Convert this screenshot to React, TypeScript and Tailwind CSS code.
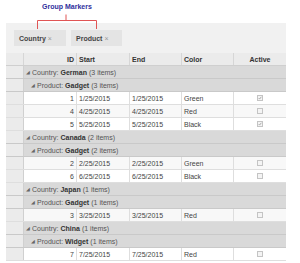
import React from "react";

type Row =
  | { kind: "country"; name: string; count: number }
  | { kind: "product"; name: string; count: number }
  | { kind: "data"; id: number; start: string; end: string; color: string; active: boolean; alt: boolean };

const rows: Row[] = [
  { kind: "country", name: "German", count: 3 },
  { kind: "product", name: "Gadget", count: 3 },
  { kind: "data", id: 1, start: "1/25/2015", end: "1/25/2015", color: "Green", active: true, alt: false },
  { kind: "data", id: 4, start: "4/25/2015", end: "4/25/2015", color: "Red", active: false, alt: true },
  { kind: "data", id: 5, start: "5/25/2015", end: "5/25/2015", color: "Black", active: true, alt: false },
  { kind: "country", name: "Canada", count: 2 },
  { kind: "product", name: "Gadget", count: 2 },
  { kind: "data", id: 2, start: "2/25/2015", end: "2/25/2015", color: "Green", active: false, alt: true },
  { kind: "data", id: 6, start: "6/25/2015", end: "6/25/2015", color: "Black", active: false, alt: false },
  { kind: "country", name: "Japan", count: 1 },
  { kind: "product", name: "Gadget", count: 1 },
  { kind: "data", id: 3, start: "3/25/2015", end: "3/25/2015", color: "Red", active: false, alt: true },
  { kind: "country", name: "China", count: 1 },
  { kind: "product", name: "Widget", count: 1 },
  { kind: "data", id: 7, start: "7/25/2015", end: "7/25/2015", color: "Red", active: false, alt: false },
];

const Check: React.FC<{ on: boolean }> = ({ on }) => (
  <div className="w-[6px] h-[6px] border border-[#c4c4c4] bg-[#f4f4f4] flex items-center justify-center">
    {on && (
      <svg width="6" height="6" viewBox="0 0 6 6">
        <path d="M1 3.2 L2.4 4.6 L5 1.2" stroke="#8a8a8a" strokeWidth="1" fill="none" />
      </svg>
    )}
  </div>
);

const GroupRow: React.FC<{ label: string; name: string; count: number; indent: boolean }> = ({ label, name, count, indent }) => (
  <div className="flex h-[13px] border-b border-[#c9c9c9]">
    <div className="w-[18px] bg-[#ebebeb] border-r border-[#d0d0d0]" />
    <div className={`flex-1 bg-[#d9d9d9] flex items-center text-[#555] ${indent ? "pl-[7px]" : "pl-[2px]"}`}>
      <span className="text-[5px] text-[#666] mr-[2px]">◢</span>
      <span>{label}: </span>
      <span className="font-bold text-[#333] ml-[2px]">{name}</span>
      <span className="ml-[2px]">({count} items)</span>
    </div>
  </div>
);

const App: React.FC = () => {
  return (
    <div className="w-[300px] h-[263px] bg-white relative font-['Liberation_Sans',Arial,sans-serif] text-[7px] leading-none overflow-hidden">
      {/* Title */}
      <div className="h-[23px] pl-[42px] pt-[3px] text-[#2f2f9c] font-semibold">Group Markers</div>

      <div className="ml-[6px] w-[280px]">
        {/* Group panel */}
        <div className="h-[30px] bg-[#f1f1f1] flex items-center gap-[5px] pl-[8px]">
          <div className="h-[16px] w-[52px] bg-[#e4e4e4] flex items-center pl-[5px] text-[#444]">
            <span className="font-bold">Country</span>
            <span className="ml-[2px] text-[#999]">×</span>
          </div>
          <div className="h-[16px] w-[51px] bg-[#e4e4e4] flex items-center pl-[5px] text-[#444]">
            <span className="font-bold">Product</span>
            <span className="ml-[2px] text-[#999]">×</span>
          </div>
        </div>

        {/* Grid header */}
        <div className="flex h-[13px] bg-[#ebebeb] border-b border-[#cfcfcf] text-[#333] font-bold">
          <div className="w-[18px] border-r border-[#d6d6d6]" />
          <div className="w-[53px] border-r border-[#d6d6d6] flex items-center justify-end pr-[2px]">ID</div>
          <div className="w-[53px] border-r border-[#d6d6d6] flex items-center pl-[2px]">Start</div>
          <div className="w-[52px] border-r border-[#d6d6d6] flex items-center pl-[2px]">End</div>
          <div className="w-[52px] border-r border-[#d6d6d6] flex items-center pl-[2px]">Color</div>
          <div className="w-[52px] flex items-center justify-center">Active</div>
        </div>

        {/* Grid body */}
        {rows.map((r, i) => {
          if (r.kind === "country") return <GroupRow key={i} label="Country" name={r.name} count={r.count} indent={false} />;
          if (r.kind === "product") return <GroupRow key={i} label="Product" name={r.name} count={r.count} indent={true} />;
          return (
            <div key={i} className={`flex h-[13px] border-b border-[#dedede] text-[#444] ${r.alt ? "bg-[#f8f8f8]" : "bg-white"}`}>
              <div className="w-[18px] bg-[#ebebeb] border-r border-[#d0d0d0]" />
              <div className="w-[53px] border-r border-[#dedede] flex items-center justify-end pr-[2px]">{r.id}</div>
              <div className="w-[53px] border-r border-[#dedede] flex items-center pl-[2px]">{r.start}</div>
              <div className="w-[52px] border-r border-[#dedede] flex items-center pl-[2px]">{r.end}</div>
              <div className="w-[52px] border-r border-[#dedede] flex items-center pl-[2px]">{r.color}</div>
              <div className="w-[52px] flex items-center justify-center">
                <Check on={r.active} />
              </div>
            </div>
          );
        })}
      </div>

      {/* Red bracket pointing to the group markers */}
      <svg className="absolute left-0 top-0" width="120" height="32" viewBox="0 0 120 32">
        <path d="M66 14.5 V20.5 M37.5 29 V20.5 H96.5 V29" stroke="#e05555" strokeWidth="1" fill="none" />
      </svg>
    </div>
  );
};

export default App;
